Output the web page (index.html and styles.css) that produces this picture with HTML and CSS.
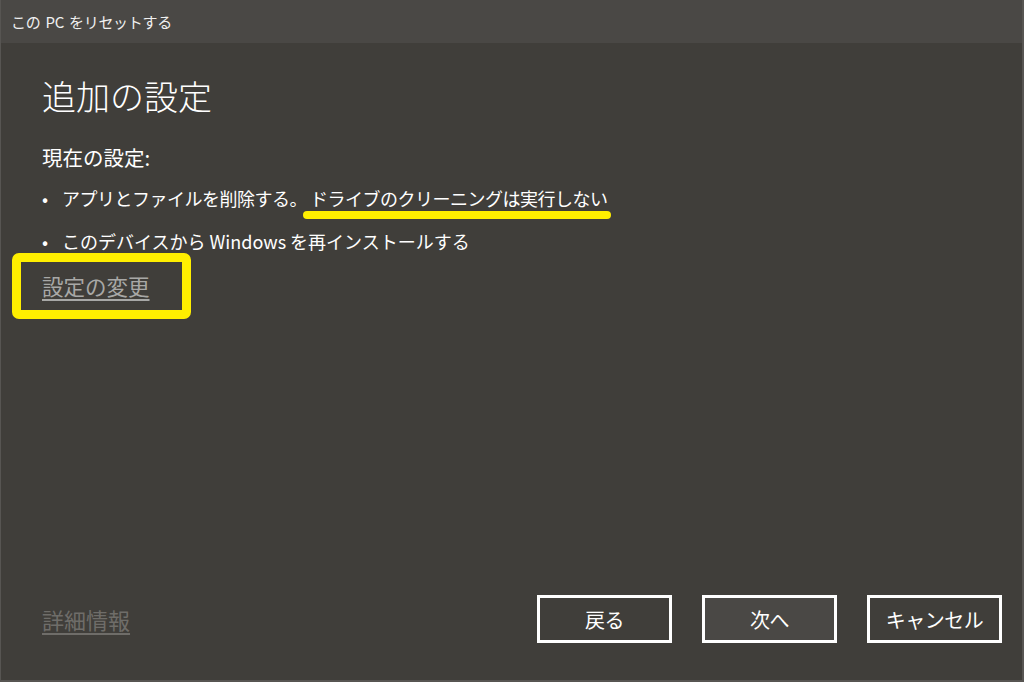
FILE: index.html
```html
<!DOCTYPE html>
<html lang="ja">
<head>
    <meta charset="UTF-8">
    <title>この PC をリセットする</title>
    <link rel="stylesheet" href="styles.css">
</head>
<body>
    <div class="window">
        <div class="titlebar">この PC をリセットする</div>

        <div class="content">
            <h1>追加の設定</h1>
            <p class="label">現在の設定:</p>
            <ul class="settings">
                <li>アプリとファイルを削除する。<span class="marked">ドライブのクリーニングは実行しない</span></li>
                <li>このデバイスから Windows を再インストールする</li>
            </ul>
            <a href="#" class="link change">設定の変更</a>
        </div>

        <div class="footer">
            <a href="#" class="link more">詳細情報</a>
            <div class="buttons">
                <button class="btn">戻る</button>
                <button class="btn btn-next">次へ</button>
                <button class="btn">キャンセル</button>
            </div>
        </div>
    </div>
</body>
</html>
```

FILE: styles.css
```css
*,
*::before,
*::after {
    margin: 0;
    padding: 0;
    box-sizing: border-box;
    font-family: 'Noto Sans CJK JP', 'Noto Sans', sans-serif;
}

body {
    background: #403e3a;
    width: 1024px;
    height: 682px;
    overflow: hidden;
}

.window {
    height: 682px;
    display: flex;
    flex-direction: column;
    border-left: 1px solid #575552;
    border-right: 2px solid #575552;
    border-bottom: 2px solid #575552;
}

.titlebar {
    height: 43px;
    background: #4a4845;
    color: #f0f0f0;
    font-size: 15px;
    letter-spacing: -0.3px;
    word-spacing: 2px;
    line-height: 43px;
    padding-left: 10px;
}

.content {
    flex: 1;
    padding: 29px 0 0 41px;
    color: #fff;
}

h1 {
    font-size: 34px;
    font-weight: 300;
    line-height: 48px;
    margin-bottom: 23px;
}

.label {
    font-size: 20.5px;
    line-height: 28px;
    margin-bottom: 13px;
}

.settings {
    list-style: none;
    font-size: 18px;
}

.settings li {
    line-height: 28px;
    margin-bottom: 15px;
}

.settings li:first-child {
    letter-spacing: -0.5px;
}

.settings li::before {
    content: "•";
    display: inline-block;
    width: 20px;
}

.marked {
    position: relative;
    margin-left: 3px;
}

/* yellow annotation stroke */
.marked::after {
    content: "";
    position: absolute;
    left: -7px;
    right: -3px;
    bottom: -8px;
    height: 8px;
    border-radius: 4px;
    background: #ffef00;
}

.link {
    text-decoration: underline;
    text-underline-offset: 4px;
}

.change {
    display: inline-block;
    position: relative;
    margin-top: 2px;
    font-size: 21.5px;
    line-height: 28px;
    color: #a8a8a6;
}

/* yellow annotation box */
.change::before {
    content: "";
    position: absolute;
    left: -30px;
    top: -19px;
    width: 179px;
    height: 66px;
    border: 9px solid #ffef00;
    border-radius: 7px;
}

.footer {
    display: flex;
    justify-content: space-between;
    align-items: center;
    padding: 0 20px 37px 41px;
}

.more {
    font-size: 22px;
    color: #6f6d69;
}

.buttons {
    display: flex;
    gap: 30px;
}

.btn {
    width: 135px;
    height: 48px;
    background: #403e3a;
    border: 3px solid #fff;
    color: #fff;
    font-size: 20px;
    letter-spacing: -0.5px;
    cursor: pointer;
}

.btn-next {
    background: #4a4845;
}
```
